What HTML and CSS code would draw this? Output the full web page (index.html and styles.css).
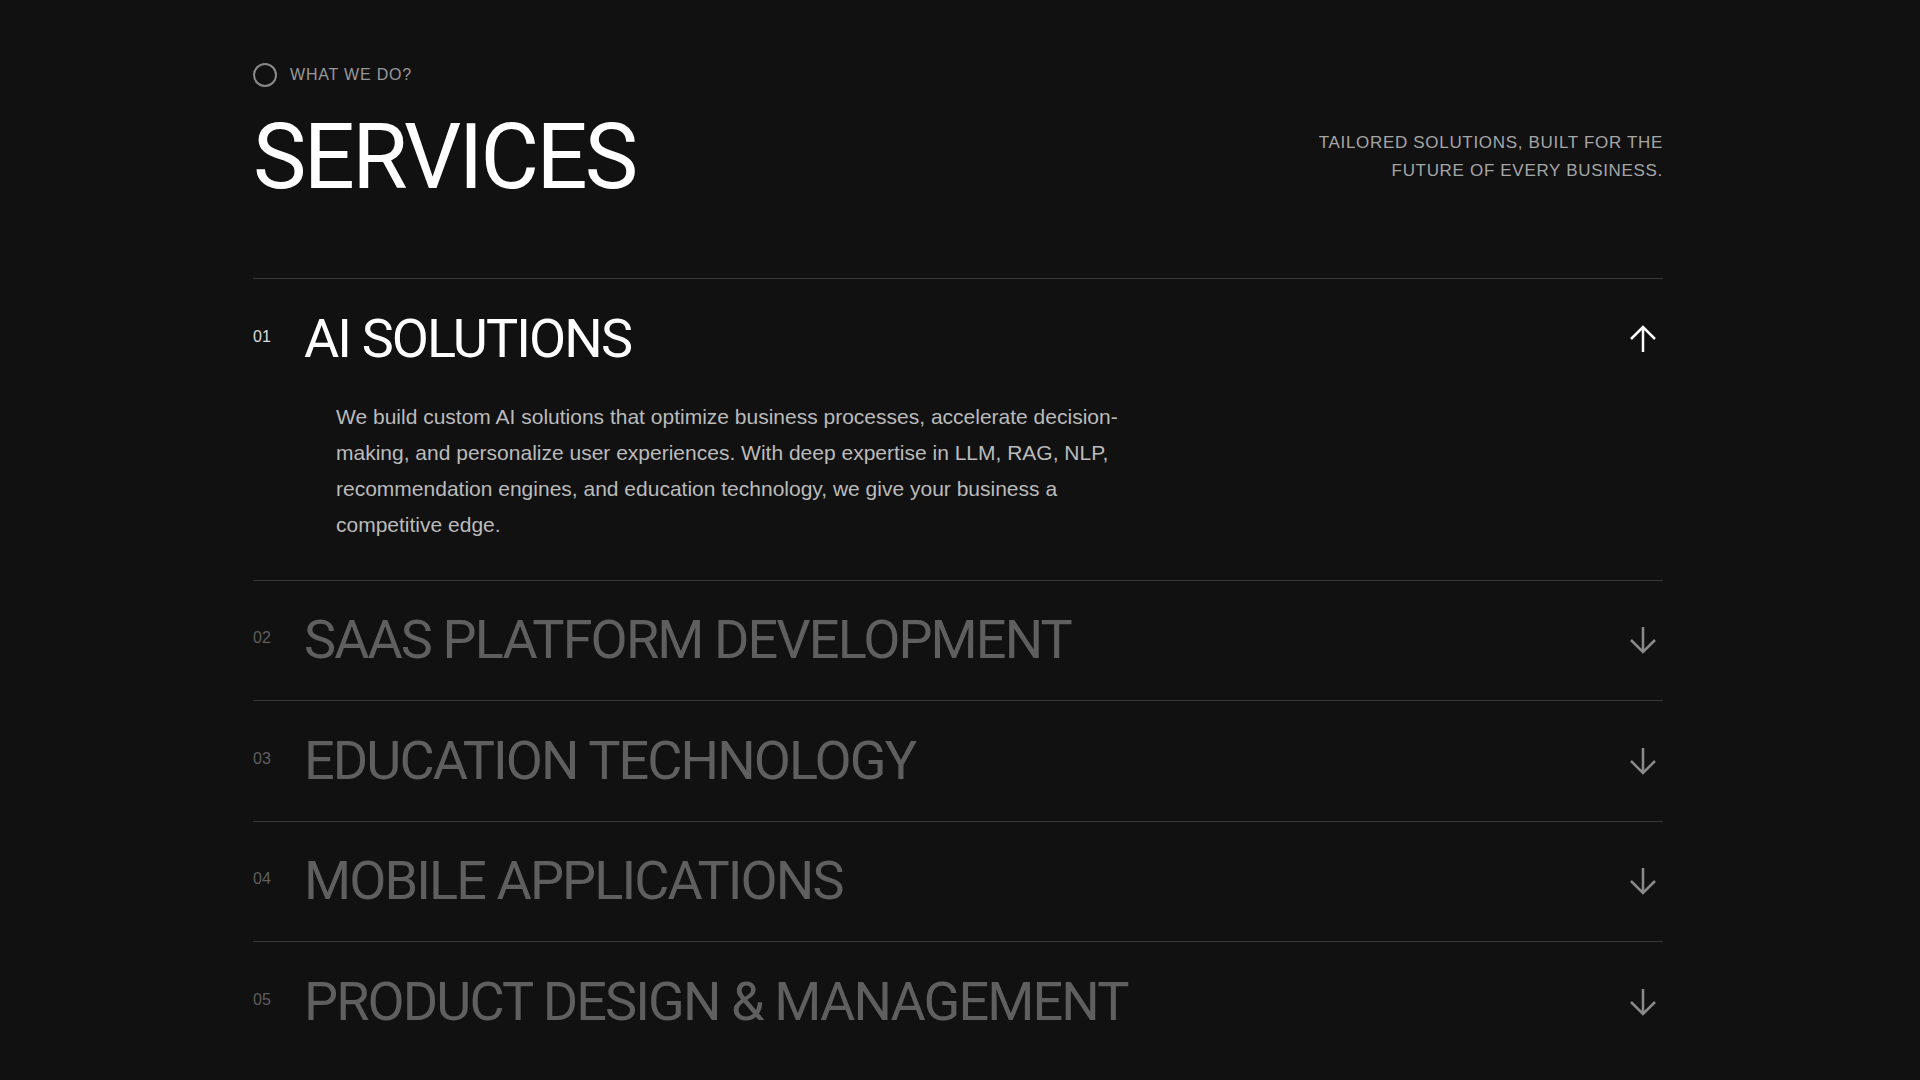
FILE: index.html
```html
<!DOCTYPE html>
<html>
<head>
    <title>Services</title>
    <link rel="stylesheet" href="styles.css">
</head>
<body>

<section class="services">
    <header class="services-head">
        <div>
            <div class="eyebrow"><span class="dot"></span>WHAT WE DO?</div>
            <h1 class="title">SERVICES</h1>
        </div>
        <p class="tagline">TAILORED SOLUTIONS, BUILT FOR THE<br>FUTURE OF EVERY BUSINESS.</p>
    </header>

    <div class="list">
        <div class="item open">
            <div class="item-head" onclick="toggleItem(this)">
                <span class="num">01</span>
                <h2 class="name">AI SOLUTIONS</h2>
                <svg class="arrow" width="28" height="28" viewBox="0 0 28 28"><path d="M14 2V27M2 14L14 2L26 14"/></svg>
            </div>
            <div class="item-body">
                <p>We build custom AI solutions that optimize business processes, accelerate decision-making, and personalize user experiences. With deep expertise in LLM, RAG, NLP, recommendation engines, and education technology, we give your business a competitive edge.</p>
            </div>
        </div>
        <div class="item">
            <div class="item-head" onclick="toggleItem(this)">
                <span class="num">02</span>
                <h2 class="name">SAAS PLATFORM DEVELOPMENT</h2>
                <svg class="arrow" width="28" height="28" viewBox="0 0 28 28"><path d="M14 2V27M2 14L14 2L26 14"/></svg>
            </div>
        </div>
        <div class="item">
            <div class="item-head" onclick="toggleItem(this)">
                <span class="num">03</span>
                <h2 class="name">EDUCATION TECHNOLOGY</h2>
                <svg class="arrow" width="28" height="28" viewBox="0 0 28 28"><path d="M14 2V27M2 14L14 2L26 14"/></svg>
            </div>
        </div>
        <div class="item">
            <div class="item-head" onclick="toggleItem(this)">
                <span class="num">04</span>
                <h2 class="name">MOBILE APPLICATIONS</h2>
                <svg class="arrow" width="28" height="28" viewBox="0 0 28 28"><path d="M14 2V27M2 14L14 2L26 14"/></svg>
            </div>
        </div>
        <div class="item">
            <div class="item-head" onclick="toggleItem(this)">
                <span class="num">05</span>
                <h2 class="name">PRODUCT DESIGN &amp; MANAGEMENT</h2>
                <svg class="arrow" width="28" height="28" viewBox="0 0 28 28"><path d="M14 2V27M2 14L14 2L26 14"/></svg>
            </div>
        </div>
    </div>
</section>

<script>
function toggleItem(head) {
    head.parentElement.classList.toggle('open');
}
</script>

</body>
</html>
```

FILE: styles.css
```css
:root {
    --bg-color: #111111;
    --line-color: #383838;
    --muted: #5f5f5f;
}

body {
    background: var(--bg-color);
    color: #fff;
    font-family: 'Liberation Sans', Arial, sans-serif;
    margin: 0;
    padding: 63px 0 0;
}

.services {
    width: 1410px;
    margin: 0 auto;
    padding-right: 4px;
}

.services-head {
    display: flex;
    justify-content: space-between;
    align-items: flex-start;
    margin-bottom: 75px;
}

.eyebrow {
    display: flex;
    align-items: center;
    gap: 13px;
    font-size: 16px;
    line-height: 24px;
    letter-spacing: 0.05em;
    color: #999;
}

.dot {
    width: 24px;
    height: 24px;
    box-sizing: border-box;
    border: 2px solid #8a8a8a;
    border-radius: 50%;
}

.title {
    margin: 26px 0 0;
    font-family: Roboto, sans-serif;
    font-weight: 400;
    font-size: 90px;
    line-height: 90px;
    letter-spacing: -0.03em;
}

.tagline {
    margin: 66px 0 0;
    text-align: right;
    font-size: 17px;
    line-height: 28px;
    letter-spacing: 0.04em;
    color: #a6a6a6;
}

.item {
    border-top: 1px solid var(--line-color);
}

.item-head {
    display: flex;
    align-items: center;
    height: 119.5px;
    cursor: pointer;
    color: var(--muted);
}

.num {
    width: 51px;
    flex-shrink: 0;
    margin-bottom: 4px;
    font-size: 16px;
}

.name {
    flex: 1;
    margin: 0;
    font-family: Roboto, sans-serif;
    font-weight: 400;
    font-size: 54px;
    line-height: 60px;
    letter-spacing: -0.035em;
}

.arrow {
    margin-right: 6px;
    fill: none;
    stroke: #8a8a8a;
    stroke-width: 2.5;
    transform: rotate(180deg);
}

.item-body {
    display: none;
    padding: 0 0 37px 83px;
}

.item-body p {
    max-width: 805px;
    margin: 0;
    font-size: 21px;
    line-height: 36px;
    color: #bbb;
}

.item.open .item-head {
    color: #fff;
}

.item.open .num {
    color: #ddd;
}

.item.open .arrow {
    stroke: #fff;
    transform: none;
}

.item.open .item-body {
    display: block;
}
```
